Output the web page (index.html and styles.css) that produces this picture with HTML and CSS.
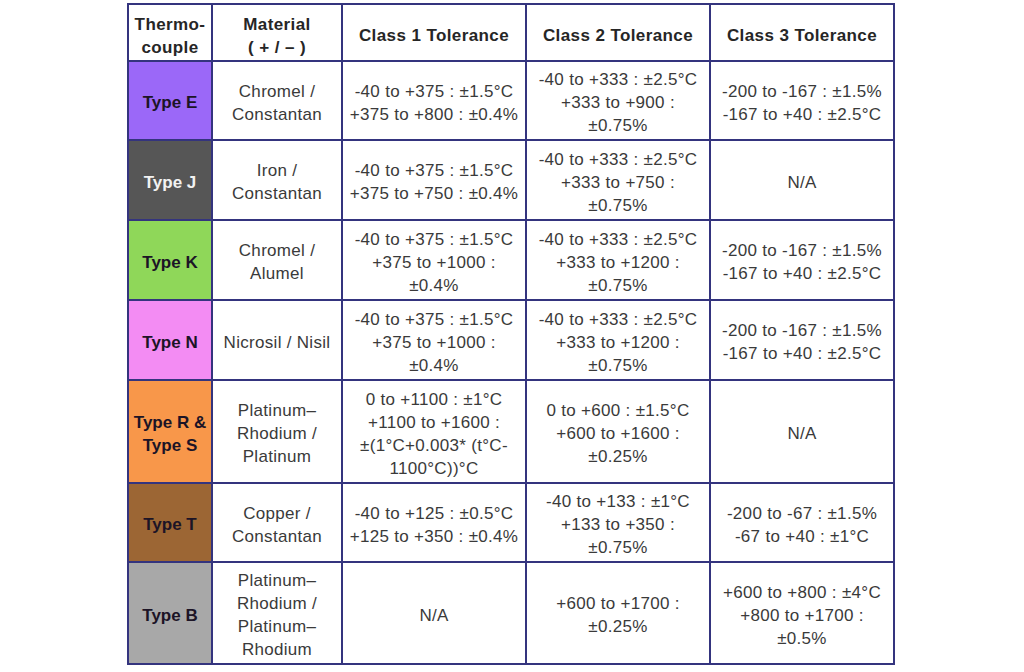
FILE: index.html
```html
<!DOCTYPE html>
<html lang="en">
<head>
<meta charset="utf-8">
<title>Thermocouple Tolerance Classes</title>
<link rel="stylesheet" href="styles.css">
</head>
<body>
<div class="page">
<table class="tc">
  <colgroup>
    <col class="c-type"><col class="c-mat"><col class="c-cls"><col class="c-cls"><col class="c-cls">
  </colgroup>
  <thead>
    <tr class="r-head">
      <th>Thermo-<br>couple</th>
      <th>Material<br>( + / – )</th>
      <th>Class 1 Tolerance</th>
      <th>Class 2 Tolerance</th>
      <th>Class 3 Tolerance</th>
    </tr>
  </thead>
  <tbody>
    <tr class="r-short">
      <td class="type t-e">Type E</td>
      <td>Chromel /<br>Constantan</td>
      <td>-40 to +375 : ±1.5°C<br>+375 to +800 : ±0.4%</td>
      <td>-40 to +333 : ±2.5°C<br>+333 to +900 :<br>±0.75%</td>
      <td>-200 to -167 : ±1.5%<br>-167 to +40 : ±2.5°C</td>
    </tr>
    <tr class="r-std">
      <td class="type t-j">Type J</td>
      <td>Iron /<br>Constantan</td>
      <td>-40 to +375 : ±1.5°C<br>+375 to +750 : ±0.4%</td>
      <td>-40 to +333 : ±2.5°C<br>+333 to +750 :<br>±0.75%</td>
      <td>N/A</td>
    </tr>
    <tr class="r-std">
      <td class="type t-k">Type K</td>
      <td>Chromel /<br>Alumel</td>
      <td>-40 to +375 : ±1.5°C<br>+375 to +1000 :<br>±0.4%</td>
      <td>-40 to +333 : ±2.5°C<br>+333 to +1200 :<br>±0.75%</td>
      <td>-200 to -167 : ±1.5%<br>-167 to +40 : ±2.5°C</td>
    </tr>
    <tr class="r-std">
      <td class="type t-n">Type N</td>
      <td>Nicrosil / Nisil</td>
      <td>-40 to +375 : ±1.5°C<br>+375 to +1000 :<br>±0.4%</td>
      <td>-40 to +333 : ±2.5°C<br>+333 to +1200 :<br>±0.75%</td>
      <td>-200 to -167 : ±1.5%<br>-167 to +40 : ±2.5°C</td>
    </tr>
    <tr class="r-tall">
      <td class="type t-rs">Type R &amp;<br>Type S</td>
      <td>Platinum–<br>Rhodium /<br>Platinum</td>
      <td>0 to +1100 : ±1°C<br>+1100 to +1600 :<br>±(1°C+0.003* (t°C-<br>1100°C))°C</td>
      <td>0 to +600 : ±1.5°C<br>+600 to +1600 :<br>±0.25%</td>
      <td>N/A</td>
    </tr>
    <tr class="r-short">
      <td class="type t-t">Type T</td>
      <td>Copper /<br>Constantan</td>
      <td>-40 to +125 : ±0.5°C<br>+125 to +350 : ±0.4%</td>
      <td>-40 to +133 : ±1°C<br>+133 to +350 :<br>±0.75%</td>
      <td>-200 to -67 : ±1.5%<br>-67 to +40 : ±1°C</td>
    </tr>
    <tr class="r-last">
      <td class="type t-b">Type B</td>
      <td>Platinum–<br>Rhodium /<br>Platinum–<br>Rhodium</td>
      <td>N/A</td>
      <td>+600 to +1700 :<br>±0.25%</td>
      <td>+600 to +800 : ±4°C<br>+800 to +1700 :<br>±0.5%</td>
    </tr>
  </tbody>
</table>
</div>
</body>
</html>
```

FILE: styles.css
```css
html, body {
  margin: 0;
  padding: 0;
  background: #ffffff;
}

.page {
  display: flex;
  justify-content: center;
  padding-top: 3px;
  padding-right: 2px;
}

.tc {
  border-collapse: collapse;
  table-layout: fixed;
  width: 768px;
  font-family: "Liberation Sans", Arial, sans-serif;
  font-size: 17px;
  line-height: 23px;
  letter-spacing: 0.3px;
  color: #3a3a3a;
  text-align: center;
}

.c-type { width: 84px; }
.c-mat { width: 130px; }
.c-cls { width: 184px; }

.tc th,
.tc td {
  border: 2px solid #34347e;
  padding: 4px 2px 0;
  vertical-align: middle;
}

.tc th {
  font-weight: bold;
  color: #262626;
  letter-spacing: 0.4px;
  padding-top: 6px;
}

.r-head { height: 57px; }
.r-short { height: 79px; }
.r-std { height: 80px; }
.r-tall { height: 103px; }
.r-last { height: 102px; }

.tc td.type {
  font-weight: bold;
  color: #1c1426;
  letter-spacing: 0;
  padding: 4px 0 0;
}

.t-e { background: #9b68f8; }
.t-j { background: #565656; color: #f2f2f2 !important; }
.t-k { background: #8fd759; }
.t-n { background: #f38cf3; }
.t-rs { background: #f8974a; }
.t-t { background: #9c6634; }
.t-b { background: #a8a8a8; }
```
